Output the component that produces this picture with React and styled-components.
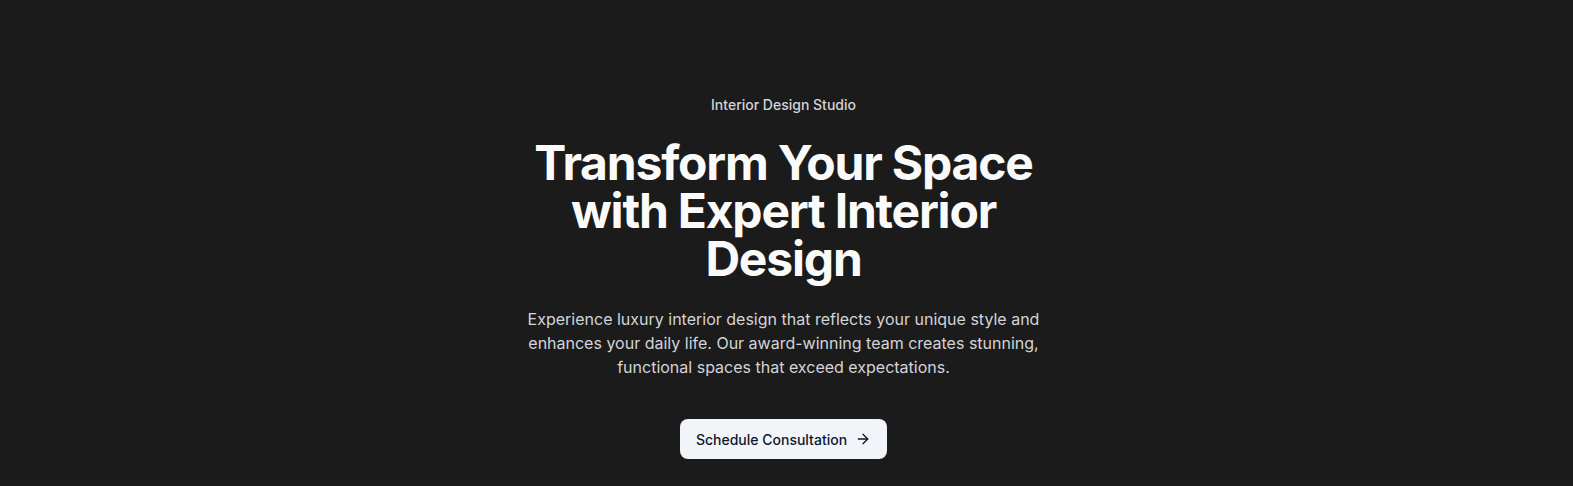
import React from "react";
import styled, { createGlobalStyle } from "styled-components";
import { ArrowRight } from "lucide-react";

const GlobalStyle = createGlobalStyle`
  * { box-sizing: border-box; }
  html, body {
    margin: 0;
    padding: 0;
    background-color: #1b1b1b;
    font-family: Inter, "Noto Sans", sans-serif;
  }
`;

const Hero = styled.section`
  min-height: 486px;
  background-color: #1b1b1b;
  display: flex;
  justify-content: center;
  padding: 95px 30px 0 24px;
`;

const Content = styled.div`
  width: 100%;
  max-width: 672px;
  display: flex;
  flex-direction: column;
  align-items: center;
  text-align: center;
`;

const Eyebrow = styled.p`
  margin: 0;
  font-size: 14px;
  line-height: 20px;
  font-weight: 500;
  color: #d4d4d8;
`;

const Title = styled.h1`
  margin: 24px 0 0;
  max-width: 512px;
  font-size: 48px;
  line-height: 48px;
  font-weight: 700;
  letter-spacing: -0.025em;
  color: #fafafa;
`;

const Lead = styled.p`
  margin: 24px 0 0;
  max-width: 520px;
  font-size: 16px;
  line-height: 24px;
  color: #d4d4d8;
`;

const Actions = styled.div`
  margin-top: 40px;
  display: flex;
  gap: 16px;
`;

const Button = styled.button`
  display: inline-flex;
  align-items: center;
  gap: 8px;
  height: 40px;
  padding: 0 16px;
  border: none;
  border-radius: 8px;
  background-color: #f1f5f9;
  color: #0f172a;
  font-family: inherit;
  font-size: 14px;
  font-weight: 500;
  cursor: pointer;

  svg {
    width: 16px;
    height: 16px;
  }
`;

export default function App() {
  return (
    <>
      <GlobalStyle />
      <Hero>
        <Content>
          <Eyebrow>Interior Design Studio</Eyebrow>
          <Title>Transform Your Space with Expert Interior Design</Title>
          <Lead>
            Experience luxury interior design that reflects your unique style
            and enhances your daily life. Our award-winning team creates
            stunning, functional spaces that exceed expectations.
          </Lead>
          <Actions>
            <Button>
              Schedule Consultation <ArrowRight />
            </Button>
          </Actions>
        </Content>
      </Hero>
    </>
  );
}
